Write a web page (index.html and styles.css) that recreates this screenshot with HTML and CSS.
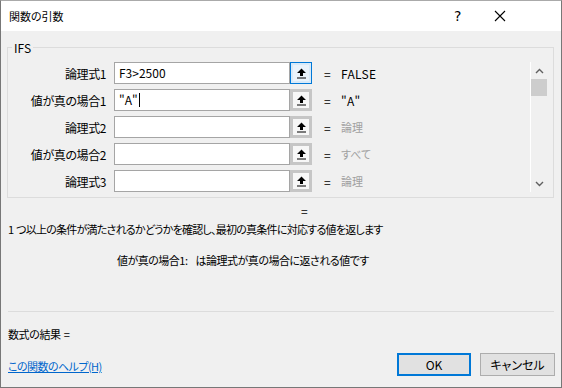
FILE: index.html
```html
<!DOCTYPE html>
<html lang="ja">
<head>
    <meta charset="UTF-8">
    <title>関数の引数</title>
    <link rel="stylesheet" href="styles.css">
</head>
<body>
<div class="window">
    <!-- タイトルバー -->
    <div class="titlebar">
        <span class="title">関数の引数</span>
        <span class="help-btn">?</span>
        <span class="close-btn">
            <svg width="12" height="12" viewBox="0 0 12 12"><path d="M1 1 L11 11 M11 1 L1 11" stroke="#000" stroke-width="1.1" fill="none"/></svg>
        </span>
    </div>

    <div class="content">
        <fieldset class="group">
            <legend>IFS</legend>
            <div class="group-body">
                <div class="args">
                    <div class="arg-row">
                        <label>論理式1</label>
                        <div class="field">F3&gt;2500</div>
                        <div class="ref-btn focus">
                            <svg width="11" height="11" viewBox="0 0 11 11"><path d="M5.5 0.5 L10 5 L7 5 L7 8 L4 8 L4 5 L1 5 Z M1 9.5 H10 V10.5 H1 Z" fill="#000"/></svg>
                        </div>
                        <span class="eq">=</span>
                        <span class="val">FALSE</span>
                    </div>
                    <div class="arg-row">
                        <label>値が真の場合1</label>
                        <div class="field">"A"<span class="caret"></span></div>
                        <div class="ref-btn">
                            <svg width="11" height="11" viewBox="0 0 11 11"><path d="M5.5 0.5 L10 5 L7 5 L7 8 L4 8 L4 5 L1 5 Z M1 9.5 H10 V10.5 H1 Z" fill="#000"/></svg>
                        </div>
                        <span class="eq">=</span>
                        <span class="val">"A"</span>
                    </div>
                    <div class="arg-row">
                        <label>論理式2</label>
                        <div class="field"></div>
                        <div class="ref-btn">
                            <svg width="11" height="11" viewBox="0 0 11 11"><path d="M5.5 0.5 L10 5 L7 5 L7 8 L4 8 L4 5 L1 5 Z M1 9.5 H10 V10.5 H1 Z" fill="#000"/></svg>
                        </div>
                        <span class="eq">=</span>
                        <span class="val hint">論理</span>
                    </div>
                    <div class="arg-row">
                        <label>値が真の場合2</label>
                        <div class="field"></div>
                        <div class="ref-btn">
                            <svg width="11" height="11" viewBox="0 0 11 11"><path d="M5.5 0.5 L10 5 L7 5 L7 8 L4 8 L4 5 L1 5 Z M1 9.5 H10 V10.5 H1 Z" fill="#000"/></svg>
                        </div>
                        <span class="eq">=</span>
                        <span class="val hint">すべて</span>
                    </div>
                    <div class="arg-row">
                        <label>論理式3</label>
                        <div class="field"></div>
                        <div class="ref-btn">
                            <svg width="11" height="11" viewBox="0 0 11 11"><path d="M5.5 0.5 L10 5 L7 5 L7 8 L4 8 L4 5 L1 5 Z M1 9.5 H10 V10.5 H1 Z" fill="#000"/></svg>
                        </div>
                        <span class="eq">=</span>
                        <span class="val hint">論理</span>
                    </div>
                </div>

                <!-- スクロールバー -->
                <div class="scrollbar">
                    <div class="sb-btn">
                        <svg width="9" height="6" viewBox="0 0 9 6"><path d="M1 5 L4.5 1.5 L8 5" stroke="#606060" stroke-width="1.4" fill="none"/></svg>
                    </div>
                    <div class="sb-thumb"></div>
                    <div class="sb-track"></div>
                    <div class="sb-btn">
                        <svg width="9" height="6" viewBox="0 0 9 6"><path d="M1 1 L4.5 4.5 L8 1" stroke="#606060" stroke-width="1.4" fill="none"/></svg>
                    </div>
                </div>
            </div>
        </fieldset>

        <div class="result-eq">=</div>
        <p class="desc">1 つ以上の条件が満たされるかどうかを確認し、最初の真条件に対応する値を返します</p>
        <p class="arg-desc"><span class="arg-name">値が真の場合1:</span>は論理式が真の場合に返される値です</p>

        <hr class="sep">

        <p class="formula-result">数式の結果 =</p>

        <div class="footer">
            <a href="#" class="help-link">この関数のヘルプ(H)</a>
            <button class="btn primary">OK</button>
            <button class="btn">キャンセル</button>
        </div>
    </div>
</div>
</body>
</html>
```

FILE: styles.css
```css
* {
    box-sizing: border-box;
}
body {
    margin: 0;
    font-family: "Noto Sans CJK JP", "Noto Sans", sans-serif;
    font-size: 12px;
    font-feature-settings: "palt";
    color: #000;
}
.window {
    width: 562px;
    height: 388px;
    background: #f0f0f0;
    border: 1px solid #777;
    border-top-color: #aaa;
}
.titlebar {
    height: 30px;
    background: #fff;
    display: flex;
    align-items: center;
    padding-left: 8px;
}
.title {
    flex: 1;
    font-size: 11px;
    line-height: 16px;
    margin-top: -1px;
}
.help-btn {
    width: 14px;
    font-size: 14px;
    font-family: "DejaVu Sans", sans-serif;
    margin-right: 26px;
    margin-top: -1px;
}
.close-btn {
    width: 12px;
    height: 12px;
    margin-right: 55px;
    display: flex;
}
.content {
    padding: 10px 7px 0 6px;
}
.group {
    margin: 0;
    padding: 8px 0 5px 0;
    border: 1px solid #dcdcdc;
    min-width: 0;
}
.group legend {
    margin-left: 4px;
    padding: 0 2px;
    line-height: 13px;
}
.group-body {
    display: flex;
}
.args {
    flex: 1;
    display: flex;
    flex-direction: column;
    gap: 5px;
}
.arg-row {
    display: flex;
    align-items: center;
    height: 22px;
}
.arg-row label {
    width: 98px;
    margin-right: 8px;
    text-align: right;
    letter-spacing: -0.4px;
}
.field {
    width: 176px;
    height: 22px;
    background: #fff;
    border: 1px solid #a5a5a5;
    padding: 0 4px;
    line-height: 20px;
    display: flex;
    align-items: center;
}
.caret {
    display: inline-block;
    width: 1px;
    height: 14px;
    background: #000;
    margin-left: 1px;
}
.ref-btn {
    width: 22px;
    height: 22px;
    border: 3px solid #c6c6c6;
    background: #f7f7f7;
    display: flex;
    align-items: center;
    justify-content: center;
}
.ref-btn.focus {
    border: 1px solid #0078d7;
    box-shadow: inset 0 0 0 2px #d8eaf9;
    background: #eaf3fb;
}
.eq {
    margin-left: 12px;
    width: 17px;
}
.val {
    letter-spacing: 0.3px;
}
.val.hint {
    color: #a0a0a0;
    font-size: 11px;
    letter-spacing: 0;
}
.scrollbar {
    width: 17px;
    margin-right: 6px;
    border-left: 1px solid #fff;
    display: flex;
    flex-direction: column;
}
.sb-btn {
    height: 17px;
    display: flex;
    align-items: center;
    justify-content: center;
}
.sb-thumb {
    height: 17px;
    background: #cdcdcd;
}
.sb-track {
    flex: 1;
}
.result-eq {
    margin-top: 5px;
    padding-left: 294px;
    line-height: 16px;
}
.desc {
    margin: 2px 0 0 0;
    line-height: 16px;
    padding-left: 1px;
    font-size: 11px;
    letter-spacing: -0.75px;
    word-spacing: 1px;
}
.arg-desc {
    margin: 15px 0 0 0;
    padding-left: 110px;
    line-height: 16px;
    font-size: 11px;
    letter-spacing: -0.5px;
}
.arg-name {
    margin-right: 8px;
}
.sep {
    margin: 43px 0 0 1px;
    border: 0;
    border-top: 1px solid #dcdcdc;
    width: 546px;
}
.formula-result {
    margin: 14px 0 0 1px;
    line-height: 16px;
    font-size: 11px;
    letter-spacing: -0.4px;
    word-spacing: 1px;
}
.footer {
    margin-top: 11px;
    display: flex;
    align-items: center;
    padding-left: 1px;
}
.help-link {
    flex: 1;
    color: #0066cc;
    line-height: 16px;
    margin-top: 3px;
    font-size: 11px;
    letter-spacing: -0.55px;
}
.btn {
    height: 23px;
    font-family: inherit;
    font-size: 12px;
    font-feature-settings: "palt";
    background: #e1e1e1;
    border: 1px solid #adadad;
    padding: 0;
    width: 75px;
    margin-right: -1px;
}
.btn.primary {
    width: 74px;
    border: 2px solid #0078d7;
    margin-right: 9px;
}
```
